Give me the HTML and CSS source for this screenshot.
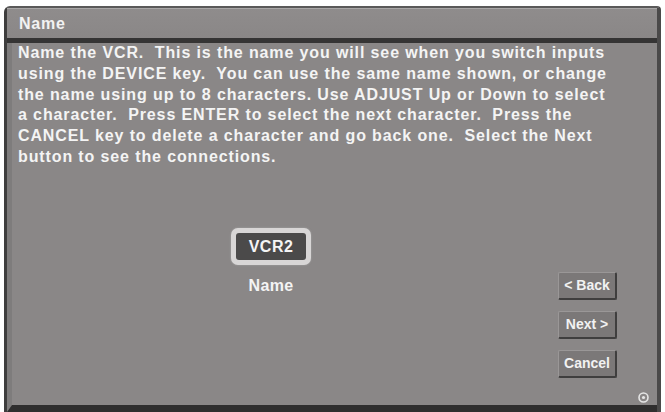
FILE: index.html
```html
<!DOCTYPE html>
<html lang="en">
<head>
    <meta charset="UTF-8">
    <title>Name</title>
    <link rel="stylesheet" href="styles.css">
</head>
<body>
    <div class="frame">
        <div class="title-bar">Name</div>
        <div class="panel">
            <p class="intro">Name the VCR.&nbsp; This is the name you will see when you switch inputs<br>
            using the DEVICE key.&nbsp; You can use the same name shown, or change<br>
            the name using up to 8 characters. Use ADJUST Up or Down to select<br>
            a character.&nbsp; Press ENTER to select the next character.&nbsp; Press the<br>
            CANCEL key to delete a character and go back one.&nbsp; Select the Next<br>
            button to see the connections.</p>

            <div class="lower">
                <div class="name-field">
                    <div class="name-box"><span>VCR2</span></div>
                    <div class="name-label">Name</div>
                </div>
                <div class="buttons">
                    <div class="btn">&lt; Back</div>
                    <div class="btn">Next &gt;</div>
                    <div class="btn">Cancel</div>
                </div>
            </div>
            <div class="logo">
                <svg width="11" height="11" viewBox="0 0 11 11"><circle cx="5.5" cy="5.5" r="4.5" fill="none" stroke="#e6e6e6" stroke-width="1.6"/><circle cx="5.5" cy="5.5" r="1.6" fill="#e6e6e6"/></svg>
            </div>
        </div>
    </div>
</body>
</html>
```

FILE: styles.css
```css
body { margin: 0; background: #fff; font-family: "Liberation Sans", Arial, sans-serif; }
.frame { margin: 6px 4px 0 4px; height: 406px; background: #8a8787; border-left: 3px solid #3e3d3d; border-right: 4px solid #4a4949; border-top: 2px solid #5a5959; border-radius: 6px 4px 0 0; box-sizing: border-box; display: flex; flex-direction: column; }
.title-bar { height: 35px; background: linear-gradient(#8f8c8c, #8a8787); border-bottom: 5px solid #353434; color: #f2f2f2; font-weight: bold; font-size: 16px; letter-spacing: 0.8px; padding: 7px 0 0 12px; box-sizing: border-box; box-shadow: inset 0 1px 0 #a9a7a7; }
.panel { flex: 1; position: relative; border-left: 5px solid #7e7c7c; border-bottom: 7px solid #2f2e2e; padding: 0 0 0 6px; display: flex; flex-direction: column; }
.intro { margin: 0; color: #f4f4f4; font-weight: bold; font-size: 16px; letter-spacing: 0.88px; line-height: 20.8px; white-space: nowrap; }
.lower { display: flex; margin-top: 60px; }
.name-field { margin-left: 213px; display: flex; flex-direction: column; align-items: center; }
.name-box { padding: 5px; border-radius: 7px; background: #d8d6d6; box-shadow: 0 0 2px #aaa; }
.name-box span { display: block; width: 70px; height: 27px; line-height: 27px; background: #4b4a4a; color: #f4f4f4; text-align: center; font-weight: bold; font-size: 16px; letter-spacing: 0.5px; border-radius: 3px; }
.name-label { margin-top: 12px; color: #f4f4f4; font-weight: bold; font-size: 16px; letter-spacing: 0.3px; }
.buttons { margin-left: 247px; margin-top: 44px; display: flex; flex-direction: column; gap: 11px; }
.btn { width: 56px; height: 25px; line-height: 25px; background: #7b7878; color: #f2f2f2; text-align: center; font-weight: bold; font-size: 14px; border-radius: 2px; border-top: 1px solid #9a9797; border-left: 1px solid #9a9797; border-right: 2px solid #3f3e3e; border-bottom: 2px solid #3f3e3e; }
.logo { position: absolute; right: 8px; bottom: -2px; }
```
